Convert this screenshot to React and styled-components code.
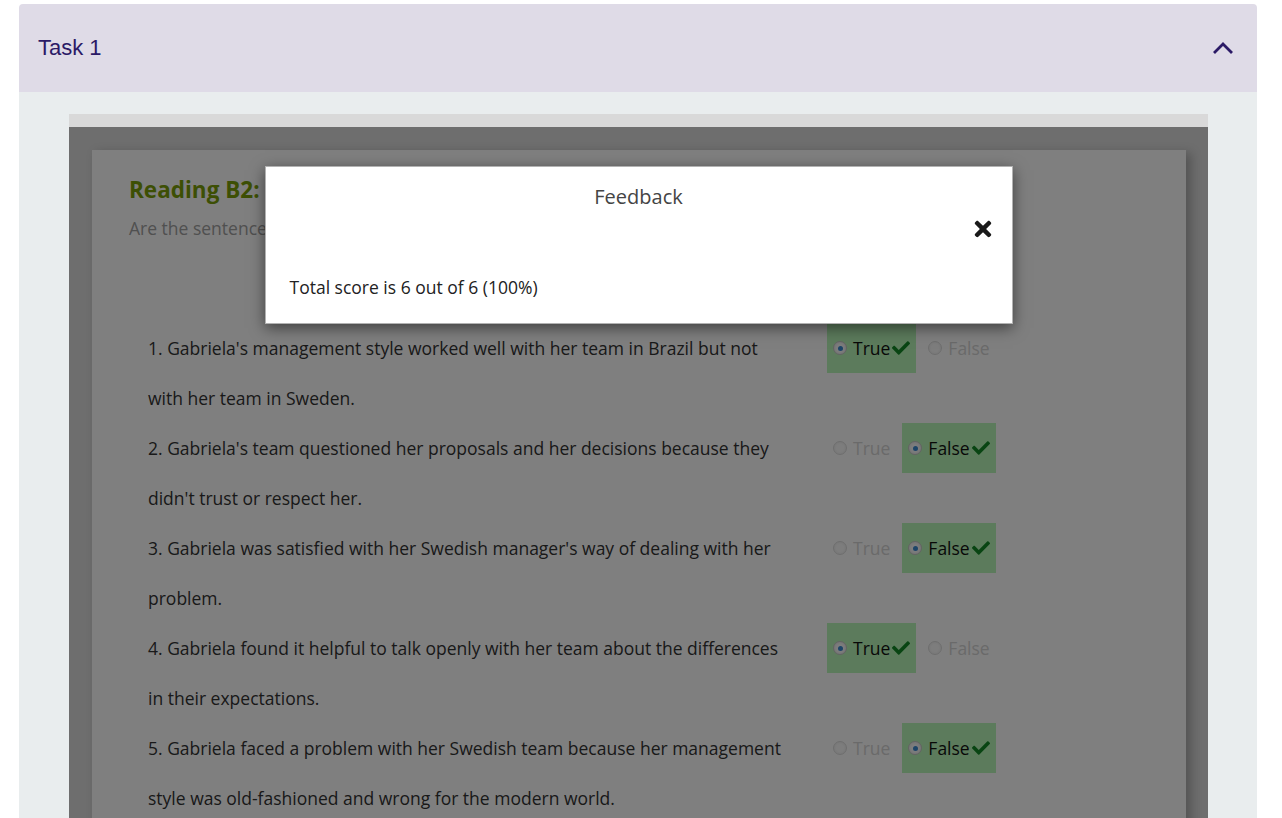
import React from "react";
import styled, { createGlobalStyle } from "styled-components";
import { FaCheck, FaTimes } from "react-icons/fa";

const GlobalStyle = createGlobalStyle`
  html, body {
    margin: 0;
    padding: 0;
    background: #fff;
    overflow: hidden;
  }
`;

const Page = styled.div`
  padding: 4px 25px 0 19px;
`;

const Accordion = styled.section`
  border-radius: 4px 4px 0 0;
  overflow: hidden;
`;

const AccordionHeader = styled.div`
  height: 88px;
  background: #dfdbe7;
  display: flex;
  align-items: center;
  justify-content: space-between;
  padding: 0 23px 0 19px;
`;

const TaskTitle = styled.h3`
  margin: 0;
  font-family: "Liberation Sans", Arial, sans-serif;
  font-size: 22px;
  font-weight: 400;
  color: #2b1a66;
`;

const AccordionBody = styled.div`
  background: #e9edee;
  padding: 22px 49px 0 50px;
`;

const FrameBar = styled.div`
  height: 13px;
  background: #d9d9d9;
`;

const Stage = styled.div`
  position: relative;
  background: #dcdcdc;
  padding: 23px 22px 0 23px;
  height: 700px;
  font-family: "Open Sans", sans-serif;
`;

const Card = styled.div`
  background: #fff;
  padding: 25px 37px 40px;
  box-shadow: 5px 3px 10px rgba(0, 0, 0, 0.25);
  min-height: 800px;
`;

const Heading = styled.h2`
  margin: 0;
  font-size: 22.5px;
  line-height: 30px;
  font-weight: 700;
  color: #7a9e08;
`;

const Instruction = styled.p`
  margin: 11px 0 0;
  font-size: 17.5px;
  line-height: 24px;
  color: #a0a0a0;
`;

const QuestionList = styled.div`
  margin-top: 83px;
  padding-left: 19px;
  display: grid;
  grid-template-columns: 640px auto;
  column-gap: 39px;
`;

const QuestionText = styled.div`
  font-size: 17.5px;
  line-height: 50px;
  color: #333;
`;

const Options = styled.div`
  display: flex;
  align-items: flex-start;
`;

const Option = styled.label`
  display: inline-flex;
  align-items: center;
  height: 50px;
  padding: 0 6px;
  margin-right: 6px;
  font-size: 17.5px;
  color: ${(p) => (p.$selected ? "#111" : "#d4d4d4")};
  background: ${(p) => (p.$selected ? "#b8f6b8" : "transparent")};
`;

const Radio = styled.span`
  width: 12px;
  height: 12px;
  border-radius: 50%;
  border: 1px solid ${(p) => (p.$checked ? "#c6c6c6" : "#dcdcdc")};
  background: ${(p) =>
    p.$checked
      ? "radial-gradient(circle, #fafafa 40%, #e0e0e0 100%)"
      : "radial-gradient(circle, #fbfbfb 40%, #e8e8e8 100%)"};
  margin-right: 6px;
  display: inline-flex;
  align-items: center;
  justify-content: center;
  &::after {
    content: "";
    width: 5px;
    height: 5px;
    border-radius: 50%;
    background: ${(p) => (p.$checked ? "#3b8ad0" : "transparent")};
  }
`;

const Tick = styled(FaCheck)`
  color: #128a26;
  font-size: 18px;
  margin-left: 2px;
`;

const Overlay = styled.div`
  position: absolute;
  inset: 0;
  background: rgba(0, 0, 0, 0.5);
`;

const Modal = styled.div`
  position: absolute;
  top: 39px;
  left: 50%;
  transform: translateX(-50%);
  width: 748px;
  box-sizing: border-box;
  background: #fff;
  border: 1px solid rgba(0, 0, 0, 0.3);
  box-shadow: 0 4px 14px rgba(0, 0, 0, 0.5);
  padding-bottom: 24px;
`;

const ModalTitle = styled.div`
  padding-top: 18px;
  text-align: center;
  font-size: 20px;
  line-height: 24px;
  color: #444;
`;

const CloseRow = styled.div`
  height: 40px;
  display: flex;
  align-items: center;
  justify-content: flex-end;
  padding-right: 17px;
`;

const CloseIcon = styled(FaTimes)`
  color: #1a1a1a;
  font-size: 24px;
`;

const ModalText = styled.p`
  margin: 26px 0 0;
  padding-left: 24px;
  font-size: 17.5px;
  line-height: 24px;
  color: #222;
`;

const ChevronUp = () => (
  <svg width="22" height="14" viewBox="0 0 22 14">
    <polyline
      points="2,12 11,3 20,12"
      fill="none"
      stroke="#2b1a66"
      strokeWidth="2.8"
    />
  </svg>
);

const questions = [
  {
    text: "1. Gabriela's management style worked well with her team in Brazil but not with her team in Sweden.",
    answer: "True",
  },
  {
    text: "2. Gabriela's team questioned her proposals and her decisions because they didn't trust or respect her.",
    answer: "False",
  },
  {
    text: "3. Gabriela was satisfied with her Swedish manager's way of dealing with her problem.",
    answer: "False",
  },
  {
    text: "4. Gabriela found it helpful to talk openly with her team about the differences in their expectations.",
    answer: "True",
  },
  {
    text: "5. Gabriela faced a problem with her Swedish team because her management style was old-fashioned and wrong for the modern world.",
    answer: "False",
  },
];

const App = () => {
  return (
    <Page>
      <GlobalStyle />
      <Accordion>
        <AccordionHeader>
          <TaskTitle>Task 1</TaskTitle>
          <ChevronUp />
        </AccordionHeader>
        <AccordionBody>
          <FrameBar />
          <Stage>
            <Card>
              <Heading>Reading B2: Managing people</Heading>
              <Instruction>
                Are the sentences true or false? Choose the correct answer.
              </Instruction>
              <QuestionList>
                {questions.map((q) => (
                  <React.Fragment key={q.text}>
                    <QuestionText>{q.text}</QuestionText>
                    <Options>
                      {["True", "False"].map((opt) => {
                        const selected = q.answer === opt;
                        return (
                          <Option key={opt} $selected={selected}>
                            <Radio $checked={selected} />
                            {opt}
                            {selected && <Tick />}
                          </Option>
                        );
                      })}
                    </Options>
                  </React.Fragment>
                ))}
              </QuestionList>
            </Card>
            <Overlay />
            <Modal>
              <ModalTitle>Feedback</ModalTitle>
              <CloseRow>
                <CloseIcon />
              </CloseRow>
              <ModalText>Total score is 6 out of 6 (100%)</ModalText>
            </Modal>
          </Stage>
        </AccordionBody>
      </Accordion>
    </Page>
  );
};

export default App;
